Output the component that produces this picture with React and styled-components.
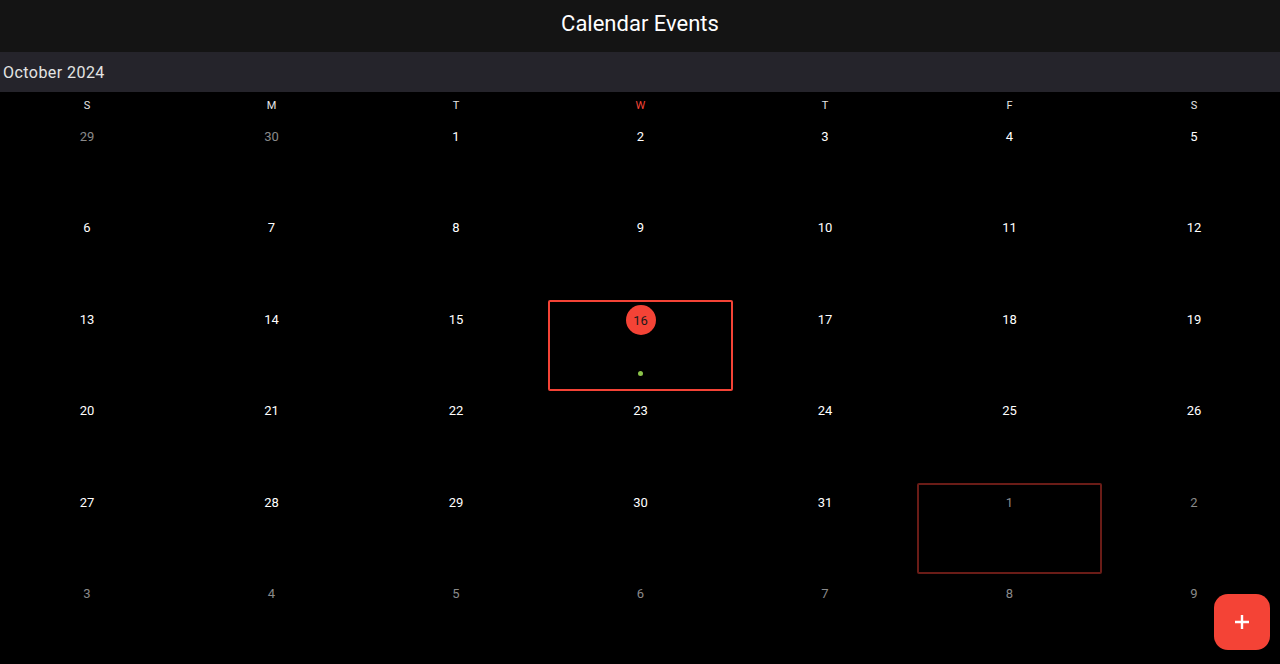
import React from "react";
import styled, { createGlobalStyle } from "styled-components";

const GlobalStyle = createGlobalStyle`
    html, body {
        margin: 0;
        padding: 0;
        background: #000;
        font-family: Roboto, "Noto Sans", sans-serif;
        overflow: hidden;
    }
`;

const days = ["S", "M", "T", "W", "T", "F", "S"];

function buildWeeks() {
    const cells = [];
    cells.push({ n: 29, out: true }, { n: 30, out: true });
    for (let i = 1; i <= 31; i++) cells.push({ n: i, out: false });
    for (let i = 1; i <= 9; i++) cells.push({ n: i, out: true });
    const weeks = [];
    for (let w = 0; w < 6; w++) weeks.push(cells.slice(w * 7, w * 7 + 7));
    return weeks;
}

function App() {
    const weeks = buildWeeks();
    return (
        <Page>
            <GlobalStyle />
            <Header>Calendar Events</Header>
            <MonthBar>October 2024</MonthBar>
            <GridClip>
                <Grid>
                    {days.map((d, i) => (
                        <DayName key={i} today={i === 3}>
                            {d}
                        </DayName>
                    ))}
                    {weeks.flat().map((c, i) => {
                        const selected = !c.out && c.n === 16;
                        const hovered = c.out && c.n === 1 && i > 30;
                        return (
                            <Cell key={i} selected={selected} hovered={hovered}>
                                {selected ? (
                                    <TodayBadge>{c.n}</TodayBadge>
                                ) : (
                                    <DayNum out={c.out}>{c.n}</DayNum>
                                )}
                                {selected && <EventDot />}
                            </Cell>
                        );
                    })}
                </Grid>
            </GridClip>
            <Fab aria-label="add">
                <svg width="20" height="20" viewBox="0 0 20 20">
                    <path d="M10 3v14M3 10h14" stroke="#fff" strokeWidth="2.4" />
                </svg>
            </Fab>
        </Page>
    );
}

const Page = styled.div`
    position: relative;
    width: 1280px;
    height: 664px;
    background: #000;
    overflow: hidden;
`;

const Header = styled.div`
    height: 52px;
    display: flex;
    align-items: center;
    justify-content: center;
    padding-bottom: 5px;
    box-sizing: border-box;
    background: #141414;
    color: #fff;
    font-size: 22px;
`;

const MonthBar = styled.div`
    height: 40px;
    display: flex;
    align-items: center;
    padding-left: 3px;
    background: #25242b;
    color: #e4e4e4;
    font-size: 16px;
    letter-spacing: 0.45px;
`;

const GridClip = styled.div`
    overflow: hidden;
`;

const Grid = styled.div`
    width: 1291.5px;
    margin-left: -5.25px;
    display: grid;
    grid-template-columns: repeat(7, 1fr);
    grid-template-rows: 25px repeat(6, 91.4px);
`;

const DayName = styled.div`
    display: flex;
    align-items: center;
    justify-content: center;
    color: ${(p) => (p.today ? "#f44336" : "#e6e6e6")};
    font-size: 11px;
    padding-top: 1px;
`;

const Cell = styled.div`
    display: flex;
    flex-direction: column;
    align-items: center;
    box-sizing: border-box;
    padding-top: 10px;
    border: 2px solid
        ${(p) =>
            p.selected ? "#f44336" : p.hovered ? "#6a1c17" : "transparent"};
    border-radius: 2px;
    ${(p) => (p.selected ? "padding-top: 3px;" : "")}
    ${(p) => (p.hovered ? "padding-top: 10px;" : "")}
`;

const DayNum = styled.span`
    font-size: 13px;
    line-height: 16px;
    color: ${(p) => (p.out ? "#8a8a8a" : "#fff")};
`;

const TodayBadge = styled.span`
    width: 30px;
    height: 30px;
    border-radius: 50%;
    background: #f44336;
    color: #1a1a1a;
    font-size: 13px;
    line-height: 13px;
    padding-top: 2px;
    box-sizing: border-box;
    display: flex;
    align-items: center;
    justify-content: center;
`;

const EventDot = styled.span`
    width: 5px;
    height: 5px;
    border-radius: 50%;
    background: #8bc34a;
    margin-top: 36px;
`;

const Fab = styled.button`
    position: absolute;
    right: 10px;
    bottom: 14px;
    width: 56px;
    height: 56px;
    border: none;
    border-radius: 14px;
    background: #f44336;
    display: flex;
    align-items: center;
    justify-content: center;
    padding: 0;
    box-shadow: 0 2px 6px rgba(0, 0, 0, 0.4);
`;

export default App;
